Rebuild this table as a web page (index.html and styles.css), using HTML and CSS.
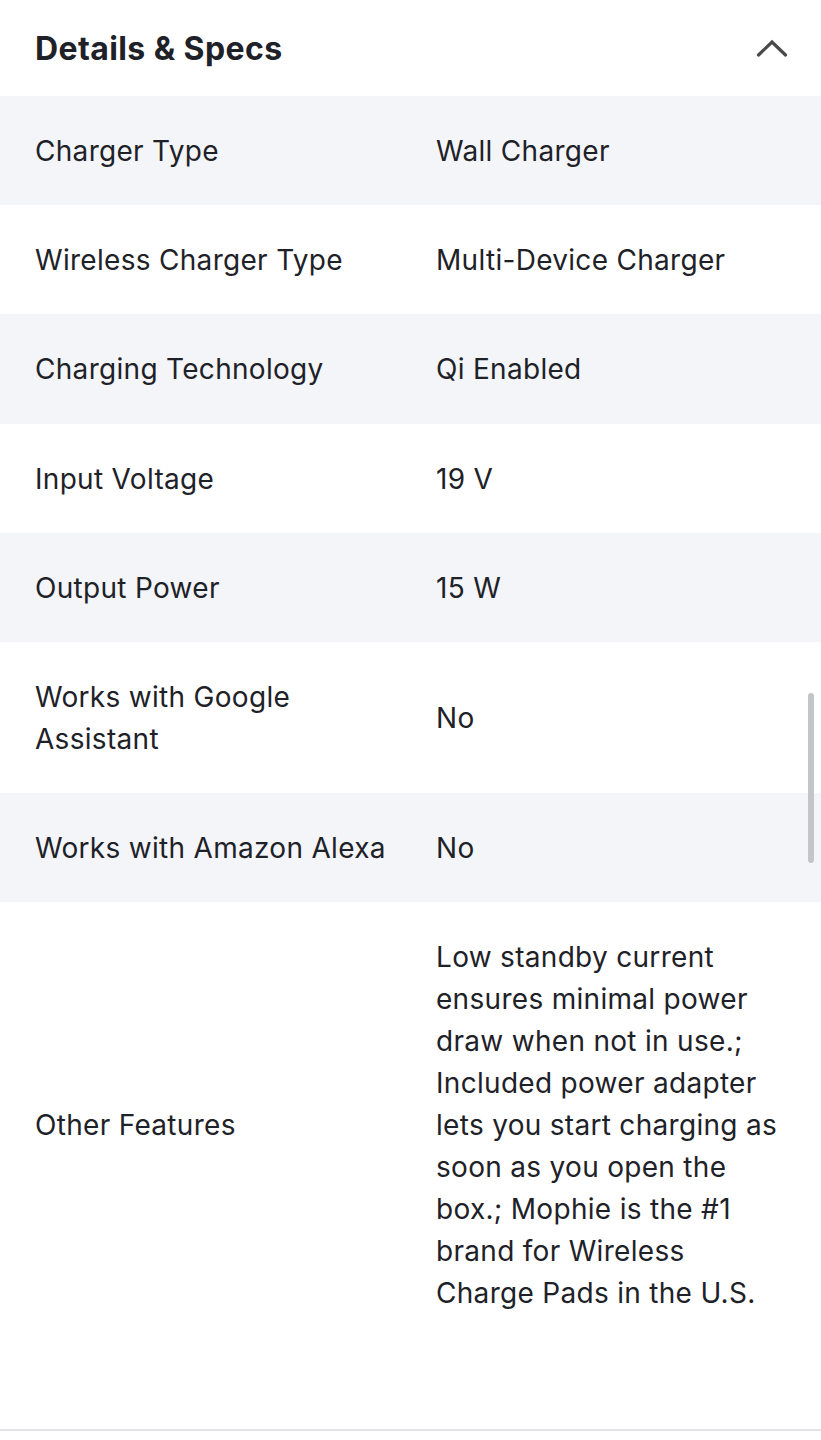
FILE: index.html
```html
<!DOCTYPE html>
<html lang="en">
<head>
<meta charset="utf-8">
<title>Details &amp; Specs</title>
<link rel="stylesheet" href="styles.css">
</head>
<body>
<section class="specs">
  <header class="specs-header">
    <h2 class="specs-title">Details &amp; Specs</h2>
    <svg class="chevron" width="32" height="20" viewBox="0 0 32 20" aria-hidden="true">
      <path d="M2.5 17 L16 4 L29.5 17" fill="none" stroke="#4a4a4d" stroke-width="3.2" stroke-linecap="round" stroke-linejoin="miter"/>
    </svg>
  </header>
  <dl class="spec-list">
    <div class="spec-row alt"><dt>Charger Type</dt><dd>Wall Charger</dd></div>
    <div class="spec-row"><dt>Wireless Charger Type</dt><dd>Multi-Device Charger</dd></div>
    <div class="spec-row alt"><dt>Charging Technology</dt><dd>Qi Enabled</dd></div>
    <div class="spec-row"><dt>Input Voltage</dt><dd>19 V</dd></div>
    <div class="spec-row alt"><dt>Output Power</dt><dd>15 W</dd></div>
    <div class="spec-row"><dt>Works with Google Assistant</dt><dd>No</dd></div>
    <div class="spec-row alt"><dt>Works with Amazon Alexa</dt><dd>No</dd></div>
    <div class="spec-row"><dt>Other Features</dt><dd>Low standby current ensures minimal power draw when not in use.; Included power adapter lets you start charging as soon as you open the box.; Mophie is the #1 brand for Wireless Charge Pads in the U.S.</dd></div>
  </dl>
</section>
<div class="scrollbar"></div>
</body>
</html>
```
FILE: styles.css
```css
html, body {
  margin: 0;
  padding: 0;
  background: #ffffff;
}
body {
  font-family: Inter, "Noto Sans", "Liberation Sans", sans-serif;
  color: #1e2228;
  position: relative;
  min-height: 1440px;
}
.specs {
  border-bottom: 2px solid #e3e2ea;
  padding-bottom: 81px;
}
.specs-header {
  height: 96px;
  display: flex;
  align-items: center;
  justify-content: space-between;
  padding: 0 33px 0 35px;
  box-sizing: border-box;
}
.specs-title {
  margin: 0;
  font-size: 32px;
  font-weight: 700;
  letter-spacing: 0.4px;
  color: #1e2228;
}
.chevron {
  display: block;
  margin-top: 0;
}
.spec-list {
  margin: 0;
}
.spec-row {
  display: grid;
  grid-template-columns: 358px 1fr;
  column-gap: 43px;
  align-items: center;
  padding: 34px 35px 33.2px;
  font-size: 28px;
  line-height: 42px;
  letter-spacing: 0.3px;
}
.spec-row.alt {
  background: #f3f5f8;
}
.spec-row dt,
.spec-row dd {
  margin: 0;
}
.scrollbar {
  position: absolute;
  top: 693px;
  left: 808px;
  width: 6px;
  height: 170px;
  border-radius: 3px;
  background: #c4c5c8;
}
```
